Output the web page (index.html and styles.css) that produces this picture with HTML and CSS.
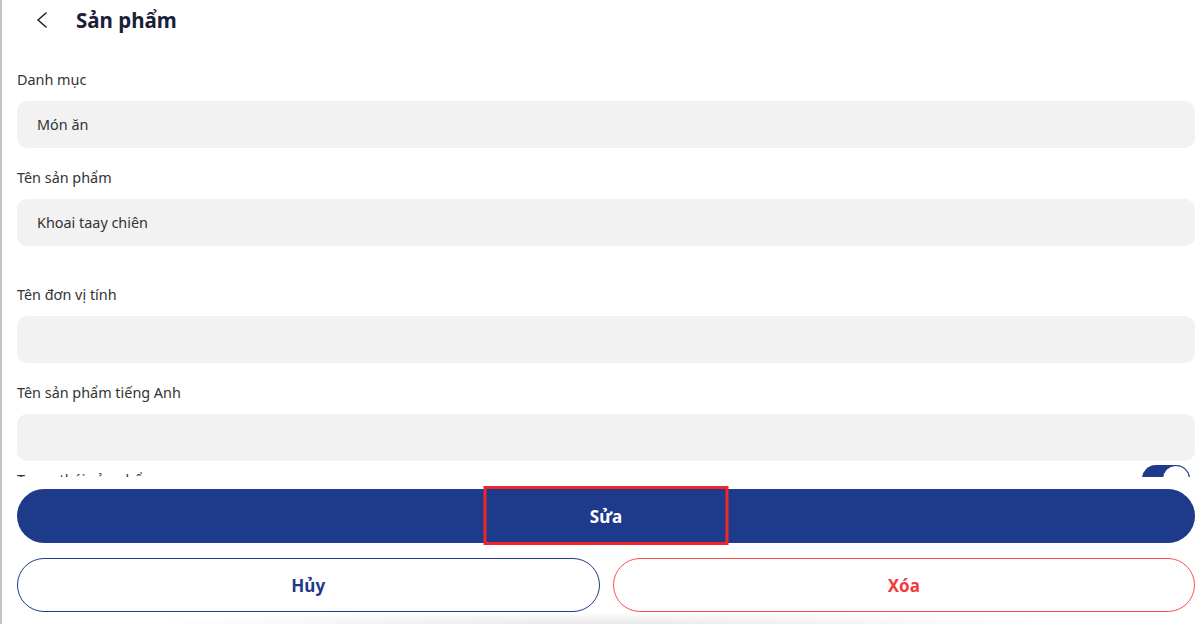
FILE: index.html
```html
<!DOCTYPE html>
<html lang="vi">
<head>
<meta charset="utf-8">
<title>Sản phẩm</title>
<link rel="stylesheet" href="styles.css">
</head>
<body>
<div class="app">
  <header class="topbar">
    <button class="back" aria-label="Quay lại">
      <svg width="12" height="16" viewBox="0 0 12 16"><path d="M10 1 L2 8 L10 15" fill="none" stroke="#222" stroke-width="1.6" stroke-linecap="round" stroke-linejoin="round"/></svg>
    </button>
    <h1 class="title">Sản phẩm</h1>
  </header>

  <main class="form">
    <div class="field">
      <label class="label">Danh mục</label>
      <div class="input">Món ăn</div>
    </div>
    <div class="field">
      <label class="label">Tên sản phẩm</label>
      <div class="input">Khoai taay chiên</div>
    </div>
    <div class="field field-spaced">
      <label class="label">Tên đơn vị tính</label>
      <div class="input"></div>
    </div>
    <div class="field">
      <label class="label">Tên sản phẩm tiếng Anh</label>
      <div class="input"></div>
    </div>
    <div class="switch-row">
      <span class="label">Trạng thái sản phẩm</span>
      <span class="switch"><span class="knob"></span></span>
    </div>
  </main>

  <footer class="actions">
    <button class="btn btn-primary">Sửa<span class="highlight"></span></button>
    <div class="btn-row">
      <button class="btn btn-outline">Hủy</button>
      <button class="btn btn-danger">Xóa</button>
    </div>
  </footer>
</div>
</body>
</html>
```

FILE: styles.css
```css
html, body {
  margin: 0;
  height: 100%;
}
body {
  font-family: "Noto Sans", "Open Sans", sans-serif;
  background: #fff;
  border-left: 2px solid #c4c4c4;
  box-sizing: border-box;
  overflow: hidden;
}
.app {
  display: flex;
  flex-direction: column;
  height: 100vh;
}
.topbar {
  height: 40px;
  flex-shrink: 0;
  display: flex;
  align-items: center;
  padding-left: 34px;
}
.back {
  border: 0;
  background: none;
  padding: 0;
  width: 12px;
  height: 16px;
  display: flex;
}
.title {
  margin: 0 0 0 28px;
  font-size: 20.5px;
  font-weight: 700;
  color: #1b2036;
}
.form {
  flex: 1;
  overflow: hidden;
  padding: 30px 5px 0 15px;
}
.label {
  display: block;
  font-size: 14.4px;
  line-height: 20px;
  color: #333;
}
.field .label {
  margin-bottom: 11px;
}
.field + .field {
  margin-top: 20px;
}
.field.field-spaced {
  margin-top: 39px;
}
.input {
  height: 47px;
  box-sizing: border-box;
  border-radius: 10px;
  background: #f2f2f2;
  padding: 0 20px;
  display: flex;
  align-items: center;
  font-size: 14.4px;
  color: #333;
}
.switch-row {
  margin-top: 4px;
  display: flex;
  align-items: center;
  justify-content: space-between;
  padding-right: 5px;
}
.switch-row .label {
  position: relative;
  top: 1px;
}
.switch {
  width: 48px;
  height: 28px;
  border-radius: 14px;
  background: #1e3a8a;
  display: flex;
  justify-content: flex-end;
}
.knob {
  width: 28px;
  height: 28px;
  box-sizing: border-box;
  border-radius: 50%;
  background: #fff;
  border: 1.5px solid #1e3a8a;
}
.actions {
  flex-shrink: 0;
  padding: 12px 5px 12px 15px;
  display: flex;
  flex-direction: column;
  gap: 15px;
  background: radial-gradient(ellipse 38% 12px at 50% 100%, #e8e8e8, rgba(255,255,255,0)), #fff;
}
.btn {
  height: 54px;
  border-radius: 27px;
  font-family: inherit;
  font-size: 17px;
  font-weight: 700;
  cursor: pointer;
}
.btn-primary {
  position: relative;
  border: 0;
  background: #1e3a8a;
  color: #fff;
}
.highlight {
  position: absolute;
  top: -3px;
  bottom: -2px;
  left: 50%;
  width: 245px;
  transform: translateX(-50%);
  box-sizing: border-box;
  border: 3px solid #f2252a;
}
.btn-row {
  display: flex;
  gap: 13px;
}
.btn-row .btn {
  flex: 1;
  background: #fff;
}
.btn-outline {
  border: 1px solid #1e3a8a;
  color: #1e3a8a;
}
.btn-danger {
  border: 1px solid #ff4d4f;
  color: #f33a3c;
}
```
